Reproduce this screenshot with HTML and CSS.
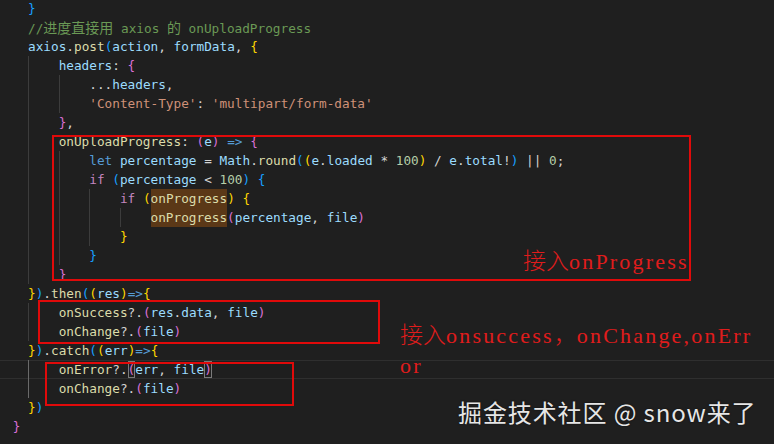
FILE: index.html
```html
<!DOCTYPE html>
<html lang="zh-CN">
<head>
<meta charset="utf-8">
<title>axios onUploadProgress</title>
<link rel="stylesheet" href="styles.css">
</head>
<body>
<div class="stage">
  <div class="code">
    <div class="line">    <span class="b3">}</span></div>
    <div class="line">    <span class="cm">//<span class="cjk">进度直接用</span> axios <span class="cjk">的</span> onUploadProgress</span></div>
    <div class="line">    <span class="v">axios</span>.<span class="f">post</span><span class="b3">(</span><span class="v">action</span>, <span class="v">formData</span>, <span class="b1">{</span></div>
    <div class="line">    <i class="g">    </i><span class="v">headers</span>: <span class="b2">{</span></div>
    <div class="line">    <i class="g">    </i><i class="g">    </i>...<span class="v">headers</span>,</div>
    <div class="line">    <i class="g">    </i><i class="g">    </i><span class="s">'Content-Type'</span>: <span class="s">'multipart/form-data'</span></div>
    <div class="line">    <i class="g">    </i><span class="b2">}</span>,</div>
    <div class="line">    <i class="g">    </i><span class="f">onUploadProgress</span>: <span class="b2">(</span><span class="v">e</span><span class="b2">)</span> <span class="k">=&gt;</span> <span class="b2">{</span></div>
    <div class="line">    <i class="g">    </i><i class="g">    </i><span class="k">let</span> <span class="v">percentage</span> = <span class="v">Math</span>.<span class="f">round</span><span class="b3">(</span><span class="b1">(</span><span class="v">e</span>.<span class="v">loaded</span> * <span class="n">100</span><span class="b1">)</span> / <span class="v">e</span>.<span class="v">total</span>!<span class="b3">)</span> || <span class="n">0</span>;</div>
    <div class="line">    <i class="g">    </i><i class="g">    </i><span class="c">if</span> <span class="b3">(</span><span class="v">percentage</span> &lt; <span class="n">100</span><span class="b3">)</span> <span class="b3">{</span></div>
    <div class="line">    <i class="g">    </i><i class="g">    </i><i class="g">    </i><span class="c">if</span> <span class="b1">(</span><span class="f hl">onProgress</span><span class="b1">)</span> <span class="b1">{</span></div>
    <div class="line">    <i class="g">    </i><i class="g">    </i><i class="g">    </i><i class="g">    </i><span class="f hl">onProgress</span><span class="b2">(</span><span class="v">percentage</span>, <span class="v">file</span><span class="b2">)</span></div>
    <div class="line">    <i class="g">    </i><i class="g">    </i><i class="g">    </i><span class="b1">}</span></div>
    <div class="line">    <i class="g">    </i><i class="g">    </i><span class="b3">}</span></div>
    <div class="line">    <i class="g">    </i><span class="b2">}</span></div>
    <div class="line">    <span class="b1">}</span><span class="b3">)</span>.<span class="f">then</span><span class="b3">(</span><span class="b1">(</span><span class="v">res</span><span class="b1">)</span><span class="k">=&gt;</span><span class="b1">{</span></div>
    <div class="line">    <i class="g">    </i><span class="f">onSuccess</span>?.<span class="b2">(</span><span class="v">res</span>.<span class="v">data</span>, <span class="v">file</span><span class="b2">)</span></div>
    <div class="line">    <i class="g">    </i><span class="f">onChange</span>?.<span class="b2">(</span><span class="v">file</span><span class="b2">)</span></div>
    <div class="line">    <span class="b1">}</span><span class="b3">)</span>.<span class="f">catch</span><span class="b3">(</span><span class="b1">(</span><span class="v">err</span><span class="b1">)</span><span class="k">=&gt;</span><span class="b1">{</span></div>
    <div class="line current">    <i class="g ga">    </i><span class="f">onError</span>?.<span class="b2 bm">(</span><span class="v">err</span>, <span class="v">file</span><span class="b2 bm">)</span></div>
    <div class="line">    <i class="g ga">    </i><span class="f">onChange</span>?.<span class="b2">(</span><span class="v">file</span><span class="b2">)</span></div>
    <div class="line">    <span class="b1">}</span><span class="b3">)</span></div>
    <div class="line">  <span class="b2">}</span></div>
  </div>

  <div class="box box-progress"></div>
  <div class="box box-success"></div>
  <div class="box box-error"></div>

  <div class="note note-progress"><span class="note-cjk">接入</span>onProgress</div>
  <div class="note note-success"><span class="note-cjk">接入</span>onsuccess<span class="note-cjk">，</span>onChange,onErr<br>or</div>

  <div class="watermark">掘金技术社区 @ snow来了</div>
</div>
</body>
</html>
```

FILE: styles.css
```css
html, body {
  margin: 0;
  padding: 0;
  background: #1f1f1f;
}

.stage {
  position: relative;
  width: 774px;
  height: 444px;
  overflow: hidden;
  background: #1f1f1f;
}

.code {
  margin-left: -2.64px;
  margin-top: -1px;
  font-family: "DejaVu Sans Mono", "Liberation Mono", monospace;
  font-size: 12.72px;
  color: #d4d4d4;
}

.line {
  height: 19px;
  line-height: 19px;
  white-space: pre;
}

.line.current {
  box-shadow: inset 0 1px 0 #2f2f2f, inset 0 -1px 0 #2f2f2f;
}

.g {
  display: inline-block;
  box-sizing: border-box;
  width: 4ch;
  height: 19px;
  vertical-align: top;
  border-left: 1px solid #3c3c3c;
  font-style: normal;
}

.g.ga {
  border-left-color: #6a6a6a;
}

.cjk {
  font-family: "Noto Sans CJK SC", sans-serif;
  font-size: 14px;
}

.v { color: #9cdcfe; }
.f { color: #dcdcaa; }
.k { color: #569cd6; }
.c { color: #c586c0; }
.s { color: #ce9178; }
.n { color: #b5cea8; }
.cm { color: #6a9955; }
.b1 { color: #ffd700; }
.b2 { color: #da70d6; }
.b3 { color: #179fff; }

.hl {
  display: inline-block;
  height: 19px;
  vertical-align: top;
  background: #5b3817;
}

.bm {
  display: inline-block;
  height: 17px;
  line-height: 17px;
  margin-top: 1px;
  vertical-align: top;
  box-shadow: inset 0 0 0 1px #7a7a7a;
}

.box {
  position: absolute;
  box-sizing: border-box;
  border: 2px solid #e00a0a;
}

.box-progress {
  left: 52px;
  top: 135px;
  width: 639px;
  height: 146px;
}

.box-success {
  left: 38px;
  top: 300px;
  width: 342px;
  height: 44px;
}

.box-error {
  left: 45px;
  top: 362px;
  width: 249px;
  height: 44px;
}

.note {
  position: absolute;
  color: #e01c1c;
  font-family: "Liberation Serif", "DejaVu Serif", serif;
  font-size: 22px;
  letter-spacing: 2.2px;
  line-height: 30px;
  white-space: nowrap;
}

.note-cjk {
  font-family: "Noto Sans CJK SC", sans-serif;
  font-size: 23px;
  font-weight: 300;
  letter-spacing: 0;
}

.note-progress {
  left: 523px;
  top: 244px;
}

.note-success {
  left: 400px;
  top: 318px;
}

.watermark {
  position: absolute;
  left: 458px;
  top: 396px;
  color: #e6e6e6;
  font-family: "Noto Sans CJK SC", sans-serif;
  font-size: 24px;
  letter-spacing: 0.9px;
  line-height: 32px;
  white-space: nowrap;
  text-shadow: 0 0 2px rgba(0, 0, 0, 0.6);
}
```
